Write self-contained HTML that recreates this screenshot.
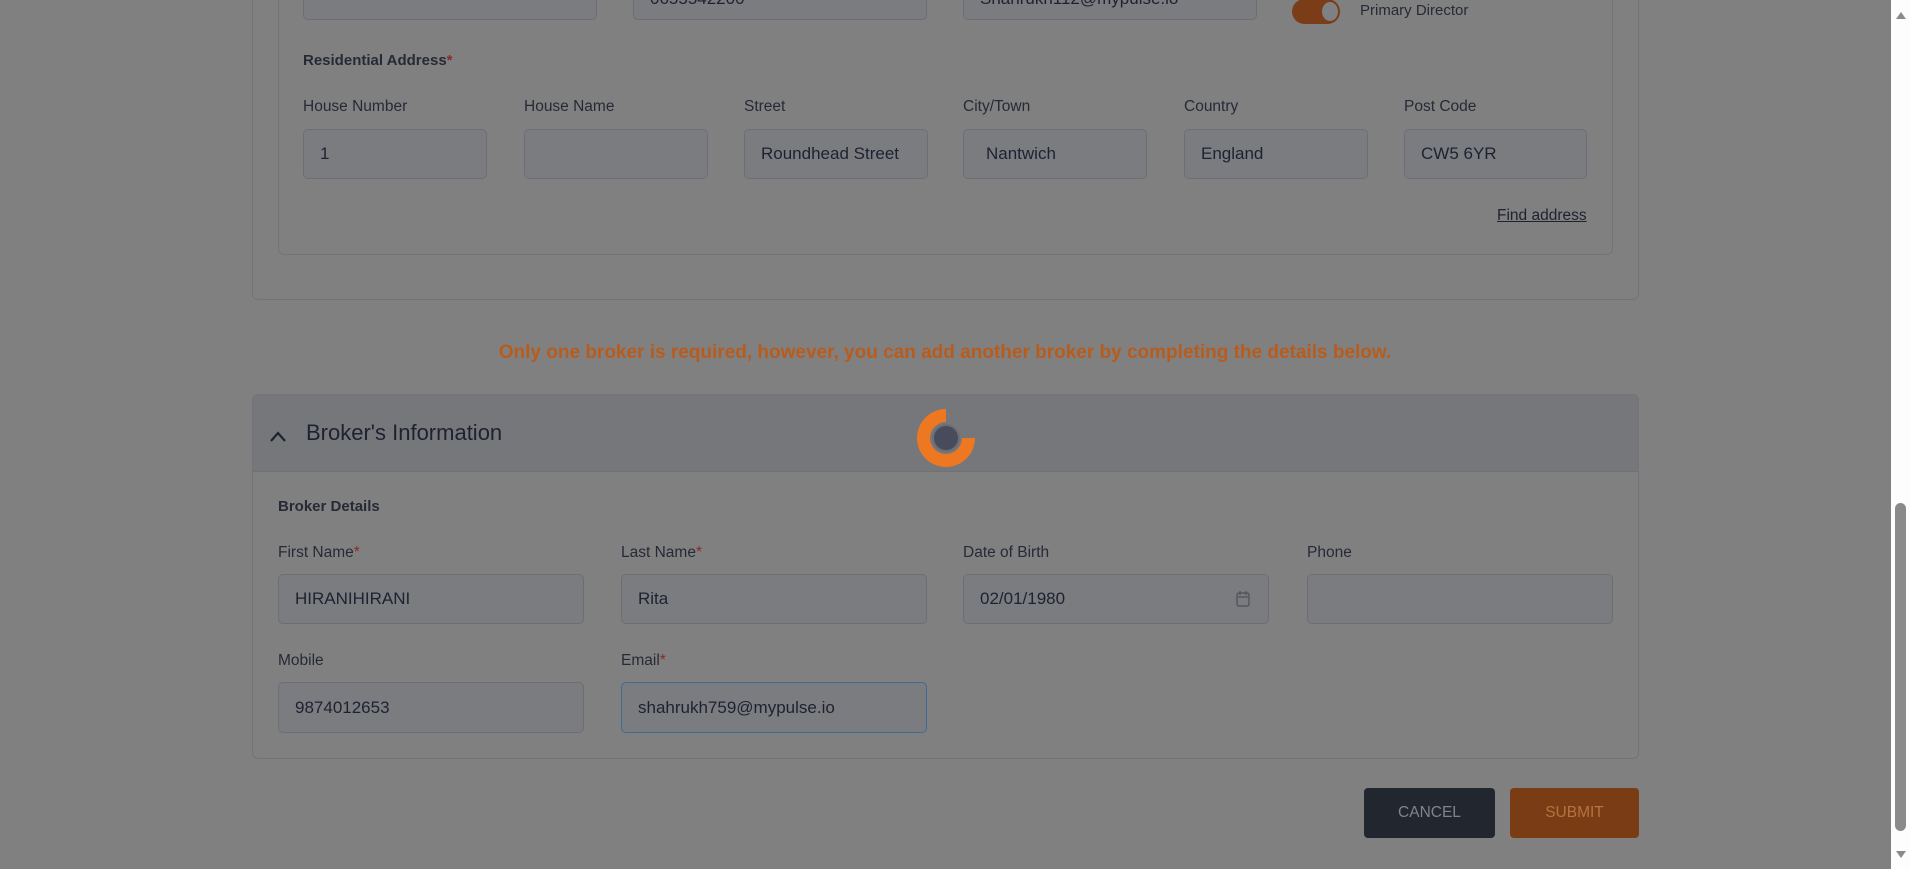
<!DOCTYPE html>
<html><head><meta charset="utf-8"><style>
*{box-sizing:border-box;margin:0;padding:0}
body{width:1910px;height:869px;overflow:hidden;background:#808080;font-family:"Liberation Sans",sans-serif;color:#1e2230;position:relative}
.a{position:absolute}
.inp{position:absolute;background:#7b7c80;border:1px solid #6c6e74;border-radius:5px;font-size:17px;color:#1e2230;padding-left:16px;display:flex;align-items:center}
.lbl{position:absolute;font-size:15.5px;color:#262a36}
.req{color:#8a2a2a}
</style></head><body>
<div class="a" style="left:252px;top:-10px;width:1387px;height:310px;border:1px solid #737478;border-radius:6px"></div>
<div class="a" style="left:278px;top:-10px;width:1335px;height:265px;border:1px solid #737478;border-radius:6px"></div>
<div class="inp" style="left:303px;top:-20px;width:294px;height:40px"></div>
<div class="inp" style="left:633px;top:-20px;width:294px;height:40px;align-items:flex-end;padding-bottom:10px;overflow:hidden">0655542200</div>
<div class="inp" style="left:963px;top:-20px;width:294px;height:40px;align-items:flex-end;padding-bottom:10px;overflow:hidden">Shahrukh112@mypulse.io</div>
<div class="a" style="left:1292px;top:-1px;width:48px;height:25px;border-radius:13px;background:#7a3d17"></div>
<div class="a" style="left:1322px;top:2px;width:16px;height:19px;border-radius:50%;background:#7f8083"></div>
<div class="a" style="left:1360px;top:2px;font-size:15px;color:#262a36">Primary Director</div>
<div class="lbl" style="left:303px;top:52px;font-weight:bold;font-size:15px">Residential Address<span class="req">*</span></div>
<div class="lbl" style="left:303px;top:98px">House Number</div>
<div class="lbl" style="left:524px;top:98px">House Name</div>
<div class="lbl" style="left:744px;top:98px">Street</div>
<div class="lbl" style="left:963px;top:98px">City/Town</div>
<div class="lbl" style="left:1184px;top:98px">Country</div>
<div class="lbl" style="left:1404px;top:98px">Post Code</div>
<div class="inp" style="left:303px;top:129px;width:184px;height:50px">1</div>
<div class="inp" style="left:524px;top:129px;width:184px;height:50px"></div>
<div class="inp" style="left:744px;top:129px;width:184px;height:50px">Roundhead Street</div>
<div class="inp" style="left:963px;top:129px;width:184px;height:50px;padding-left:22px">Nantwich</div>
<div class="inp" style="left:1184px;top:129px;width:184px;height:50px">England</div>
<div class="inp" style="left:1404px;top:129px;width:183px;height:50px">CW5 6YR</div>
<div class="a" style="left:1497px;top:207px;font-size:15.5px;text-decoration:underline;color:#1e2230">Find address</div>
<div class="a" style="left:0;width:1890px;top:342px;text-align:center;font-size:19px;font-weight:bold;color:#b85c1d">Only one broker is required, however, you can add another broker by completing the details below.</div>
<div class="a" style="left:252px;top:394px;width:1387px;height:365px;border:1px solid #737478;border-radius:6px;overflow:hidden">
<div style="height:77px;background:#76777b;border-bottom:1px solid #707175"></div></div>
<svg class="a" style="left:268px;top:428px" width="20" height="16"><path d="M3 13 L10 5 L17 13" stroke="#1e2230" stroke-width="2.2" fill="none"/></svg>
<div class="a" style="left:306px;top:420px;font-size:22px;color:#1e2230">Broker's Information</div>
<svg class="a" style="left:910px;top:402px" width="72" height="72">
<path d="M36 7 A29 29 0 1 0 65 36 L52 36 A16 16 0 1 1 36 20 Z" fill="#ee7722"/>
<circle cx="36" cy="36" r="14" fill="#6c6e74"/><circle cx="36" cy="36" r="12" fill="#474b5c"/></svg>
<div class="lbl" style="left:278px;top:498px;font-weight:bold;font-size:15px">Broker Details</div>
<div class="lbl" style="left:278px;top:544px">First Name<span class="req">*</span></div>
<div class="lbl" style="left:621px;top:544px">Last Name<span class="req">*</span></div>
<div class="lbl" style="left:963px;top:544px">Date of Birth</div>
<div class="lbl" style="left:1307px;top:544px">Phone</div>
<div class="inp" style="left:278px;top:574px;width:306px;height:50px">HIRANIHIRANI</div>
<div class="inp" style="left:621px;top:574px;width:306px;height:50px">Rita</div>
<div class="inp" style="left:963px;top:574px;width:306px;height:50px">02/01/1980
<svg class="a" style="left:271px;top:15px" width="16" height="18"><rect x="2" y="3" width="12" height="13" rx="2" fill="none" stroke="#54565e" stroke-width="1.5"/><path d="M5 1v4M11 1v4M3 7h10" stroke="#54565e" stroke-width="1.5"/></svg></div>
<div class="inp" style="left:1307px;top:574px;width:306px;height:50px"></div>
<div class="lbl" style="left:278px;top:652px">Mobile</div>
<div class="lbl" style="left:621px;top:652px">Email<span class="req">*</span></div>
<div class="inp" style="left:278px;top:682px;width:306px;height:51px">9874012653</div>
<div class="inp" style="left:621px;top:682px;width:306px;height:51px;border-color:#3f6a96">shahrukh759@mypulse.io</div>
<div class="a" style="left:1364px;top:788px;width:131px;height:50px;background:#22262f;border-radius:4px;color:#80848d;font-size:15.5px;display:flex;align-items:center;justify-content:center">CANCEL</div>
<div class="a" style="left:1510px;top:788px;width:129px;height:50px;background:#7a3c14;border-radius:4px;color:#b5733f;font-size:15.5px;display:flex;align-items:center;justify-content:center">SUBMIT</div>
<div class="a" style="left:1891px;top:0;width:19px;height:869px;background:#fdfdfd"></div>
<div class="a" style="left:1895px;top:503px;width:11px;height:328px;background:#8a8a8a;border-radius:6px"></div>
<svg class="a" style="left:1895px;top:10px" width="12" height="10"><path d="M1 9L6 2L11 9Z" fill="#8a8a8a"/></svg>
<svg class="a" style="left:1895px;top:850px" width="12" height="10"><path d="M1 1L6 8L11 1Z" fill="#8a8a8a"/></svg>
</body></html>
